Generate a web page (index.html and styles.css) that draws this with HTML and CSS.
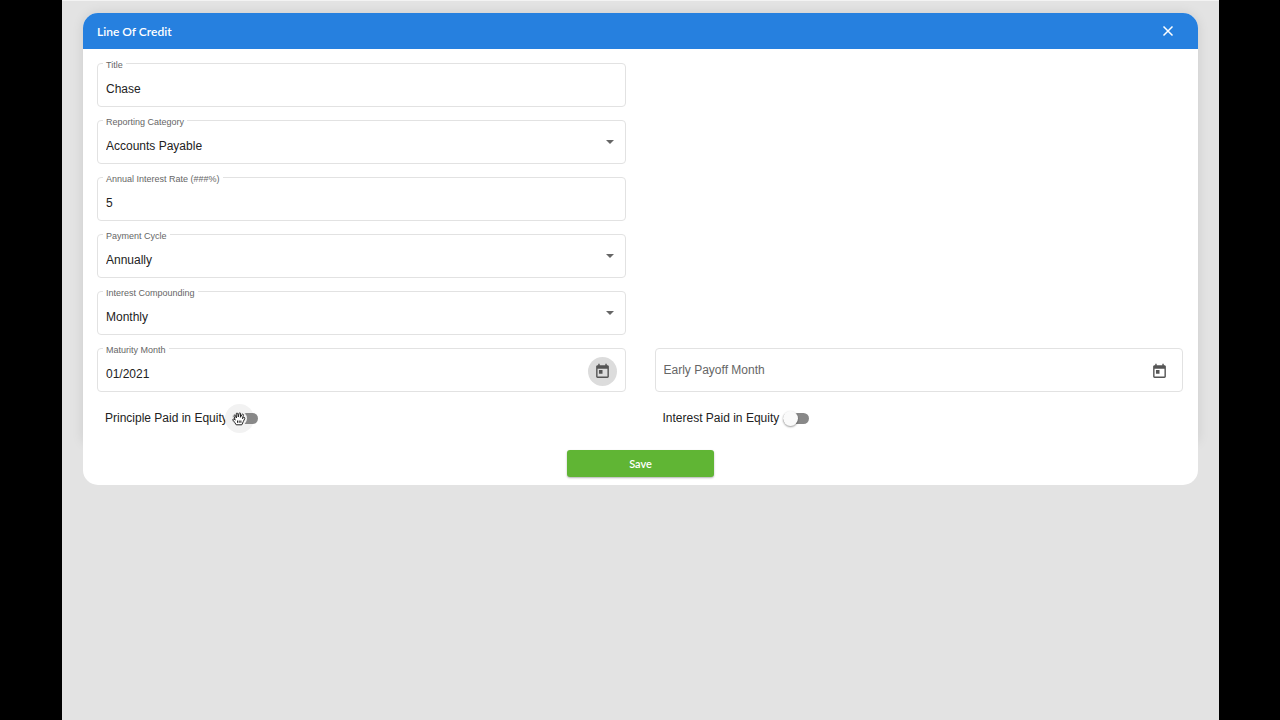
FILE: index.html
```html
<!DOCTYPE html>
<html lang="en">
<head>
    <meta charset="UTF-8">
    <title>Line Of Credit</title>
    <link rel="stylesheet" href="styles.css">
</head>
<body>
    <main class="screen">
        <form class="dialog">
            <div class="panel">
                <header class="dialog-header">
                    <h1>Line Of Credit</h1>
                    <button type="button" class="close" aria-label="Close">
                        <svg width="12" height="12" viewBox="0 0 12 12"><path d="M1.500 1.500l9 9M10.500 1.500l-9 9"/></svg>
                    </button>
                </header>
                <div class="fields">
                    <div class="field">
                        <label for="title">Title</label>
                        <input type="text" id="title" value="Chase">
                    </div>
                    <div class="field">
                        <label for="category">Reporting Category</label>
                        <select id="category"><option>Accounts Payable</option></select>
                        <svg class="arrow" width="8" height="4" viewBox="0 0 8 4"><path d="M0 0h8L4 4z"/></svg>
                    </div>
                    <div class="field">
                        <label for="rate">Annual Interest Rate (###%)</label>
                        <input type="text" id="rate" value="5">
                    </div>
                    <div class="field">
                        <label for="cycle">Payment Cycle</label>
                        <select id="cycle"><option>Annually</option></select>
                        <svg class="arrow" width="8" height="4" viewBox="0 0 8 4"><path d="M0 0h8L4 4z"/></svg>
                    </div>
                    <div class="field">
                        <label for="compounding">Interest Compounding</label>
                        <select id="compounding"><option>Monthly</option></select>
                        <svg class="arrow" width="8" height="4" viewBox="0 0 8 4"><path d="M0 0h8L4 4z"/></svg>
                    </div>
                    <div class="field">
                        <label for="maturity">Maturity Month</label>
                        <input type="text" id="maturity" value="01/2021">
                        <button type="button" class="calendar active" aria-label="Choose maturity month">
                            <svg width="17" height="17" viewBox="0 0 24 24"><path d="M19 3h-1V1h-2v2H8V1H6v2H5c-1.110 0-1.990.9-1.990 2L3 19c0 1.100.890 2 2 2h14c1.100 0 2-.9 2-2V5c0-1.100-.9-2-2-2zm0 16H5V8h14v11zM7 10h5v5H7z"/></svg>
                        </button>
                    </div>
                    <div class="field second">
                        <input type="text" id="payoff" class="empty" placeholder="Early Payoff Month" aria-label="Early Payoff Month">
                        <button type="button" class="calendar" aria-label="Choose early payoff month">
                            <svg width="17" height="17" viewBox="0 0 24 24"><path d="M19 3h-1V1h-2v2H8V1H6v2H5c-1.110 0-1.990.9-1.990 2L3 19c0 1.100.890 2 2 2h14c1.100 0 2-.9 2-2V5c0-1.100-.9-2-2-2zm0 16H5V8h14v11zM7 10h5v5H7z"/></svg>
                        </button>
                    </div>
                    <div class="toggle">
                        <label for="principle">Principle Paid in Equity</label>
                        <span class="switch hover">
                            <input type="checkbox" id="principle">
                            <svg class="hand" width="14" height="14" viewBox="0 0 14 14"><path d="M4.200 12.800C3.500 11 1.800 9.500 1 8.200c-.5-1 .6-1.600 1.300-.9l.9.9L2 4.200c-.3-1.200 1-1.600 1.500-.5l.9 2.300L4.200 2c0-1.200 1.500-1.300 1.700-.1L6.300 5l.7-3.500c.3-1.100 1.700-.8 1.600.3L8.400 5.300 9.900 2.600c.6-1 1.800-.4 1.500.7l-1 3.400 1-1c.8-.8 1.900 0 1.300 1-1 1.600-1.700 4-2.900 6.100z"/><path d="M5.500 8.500v2.300M7.200 8.500v2.300M8.900 8.500v2.300"/></svg>
                        </span>
                    </div>
                    <div class="toggle">
                        <label for="interest">Interest Paid in Equity</label>
                        <span class="switch">
                            <input type="checkbox" id="interest">
                        </span>
                    </div>
                </div>
            </div>
            <footer class="dialog-footer">
                <button type="submit" class="save">Save</button>
            </footer>
        </form>
    </main>
</body>
</html>
```
FILE: styles.css
```css
* {
    margin: 0;
    padding: 0;
    box-sizing: border-box;
}
body {
    background: #000;
    font-family: "Liberation Sans", Arial, sans-serif;
    font-size: 12px;
    color: #222;
}
input, select, button {
    font: inherit;
    color: inherit;
    border: 0;
    background: none;
    outline: 0;
}
button, select, .switch input {
    cursor: pointer;
}
.screen {
    min-height: 100vh;
    margin: 0 61px 0 62px;
    padding: 12px 21px;
    background: #e3e3e3;
    border-top: 1px solid #f3f3f3;
}
.dialog {
    border-radius: 15px;
}
.panel {
    background: #fff;
    border-radius: 15px 15px 0 0;
    box-shadow: 0 0 12px rgba(0, 0, 0, 0.1);
}
.dialog-header {
    display: flex;
    align-items: center;
    justify-content: space-between;
    height: 36px;
    padding: 0 24px 0 14px;
    border-radius: 15px 15px 0 0;
    background: #2680df;
    color: #fff;
}
.dialog-header h1 {
    font-family: Lato, sans-serif;
    font-size: 12px;
    font-weight: 600;
}
.close {
    display: flex;
}
.close path {
    fill: none;
    stroke: #fff;
    stroke-width: 1.5;
}
.fields {
    display: grid;
    grid-template-columns: 1fr 1fr;
    gap: 13px 29px;
    padding: 14px 15px 11px 14px;
}
.field {
    position: relative;
    grid-column: 1;
    display: flex;
    align-items: center;
    height: 44px;
    border: 1px solid #e2e2e2;
    border-radius: 4px;
}
.field.second {
    grid-column: 2;
}
/* label sits over the top border */
.field label {
    position: absolute;
    top: -4px;
    left: 5px;
    padding: 0 3px;
    background: #fff;
    font-size: 9px;
    line-height: 10px;
    color: #666;
}
.field input, .field select {
    flex: 1;
    min-width: 0;
    height: 42px;
    padding: 7px 8px 0;
    appearance: none;
}
.field .empty {
    padding-top: 0;
}
.field .empty::placeholder {
    color: #666;
    opacity: 1;
}
.arrow {
    position: absolute;
    right: 11px;
    fill: #666;
    pointer-events: none;
}
.calendar {
    display: flex;
    align-items: center;
    justify-content: center;
    width: 29px;
    height: 29px;
    margin: 2px 8px 0 0;
    border-radius: 50%;
    fill: #555;
}
.calendar.active {
    background: #dcdcdc;
}
.toggle {
    display: flex;
    align-items: center;
    gap: 4px;
    height: 26px;
    padding-left: 8px;
}
.switch {
    position: relative;
    z-index: 0;
    display: flex;
}
.switch input {
    display: flex;
    align-items: center;
    width: 26px;
    height: 11px;
    border-radius: 6px;
    background: #888;
    appearance: none;
}
.switch input::before {
    content: "";
    width: 15px;
    height: 15px;
    border-radius: 50%;
    background: #fafafa;
    box-shadow: 0 1px 2px rgba(0, 0, 0, 0.4);
}
/* ripple behind the track */
.switch.hover::before {
    content: "";
    position: absolute;
    z-index: -1;
    top: -9px;
    left: -7px;
    width: 29px;
    height: 29px;
    border-radius: 50%;
    background: #f2f2f2;
}
.switch.hover input::before {
    box-shadow: none;
    background: #f2f2f2;
}
.hand {
    position: absolute;
    top: -1px;
    left: 0;
    fill: #fff;
    stroke: #222;
    pointer-events: none;
}
.dialog-footer {
    position: relative;
    display: flex;
    justify-content: center;
    padding: 8px 0;
    border-radius: 0 0 15px 15px;
    background: #fff;
}
.save {
    width: 147px;
    height: 27px;
    border-radius: 3px;
    background: #60b534;
    box-shadow: 0 1px 2px rgba(0, 0, 0, 0.3);
    color: #fff;
    font-family: Lato, sans-serif;
    font-size: 11px;
    font-weight: 600;
}
```
